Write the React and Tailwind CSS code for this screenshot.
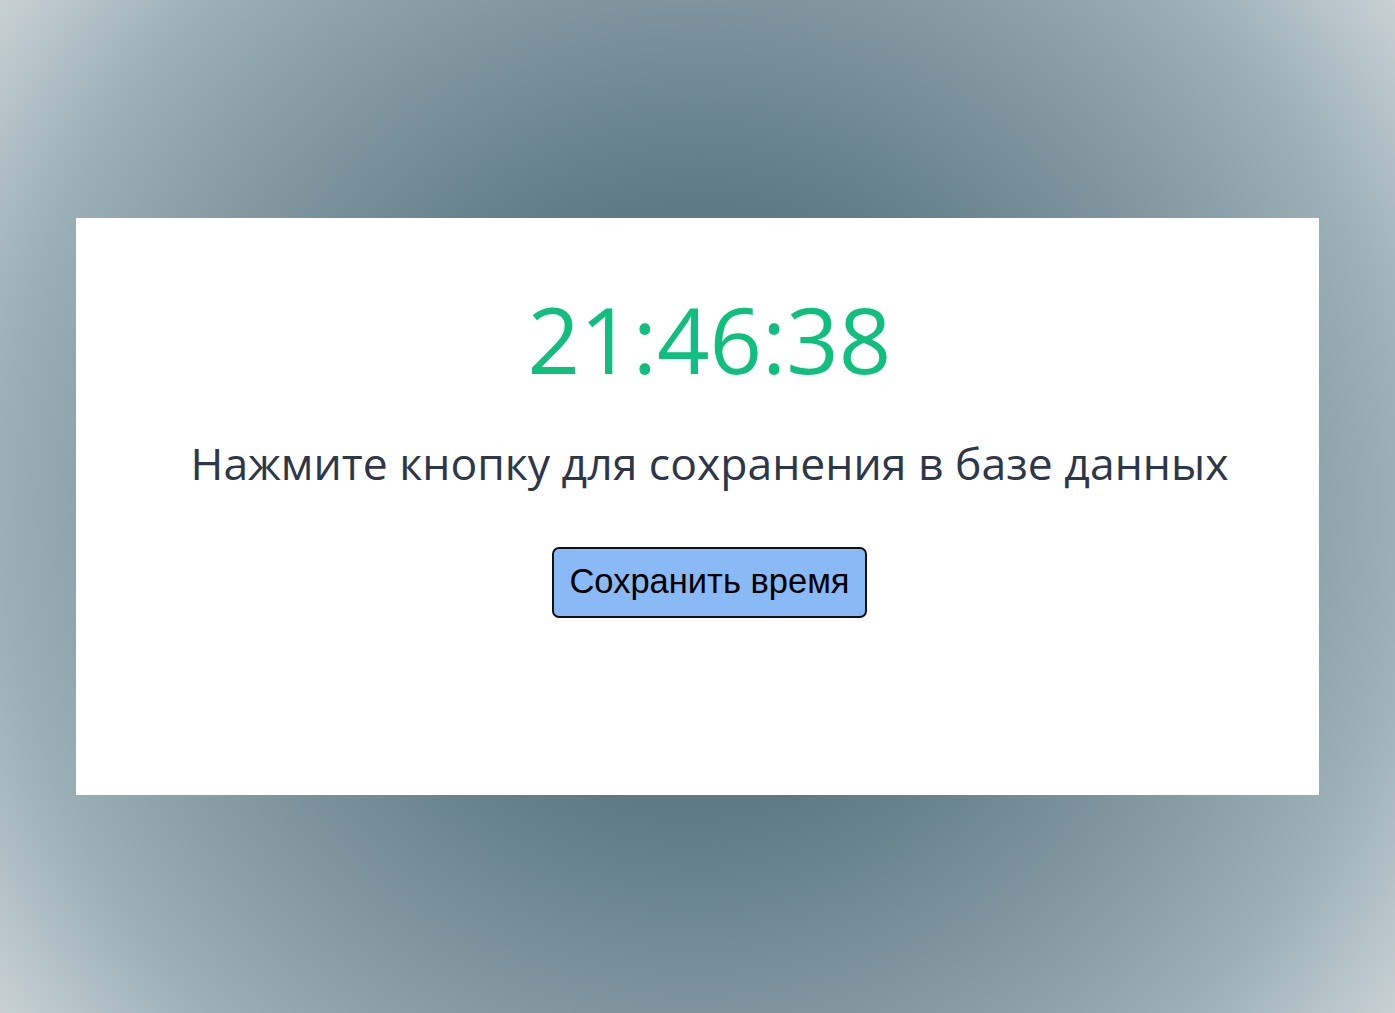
import { useEffect, useState } from 'react';

const App = () => {
  const [time] = useState('21:46:38');
  const [saved, setSaved] = useState(false);

  useEffect(() => {
    if (!saved) return;
    const t = setTimeout(() => setSaved(false), 1500);
    return () => clearTimeout(t);
  }, [saved]);

  return (
    <div className="flex min-h-screen items-center justify-center bg-[radial-gradient(circle_at_center,#5e7a85_35%,#7e959e_59%,#9aafb6_81%,#c8d0d5_100%)] px-[76px]">
      <div className="flex h-[577px] w-full flex-col items-center bg-white pl-6 pt-[75px] font-['Open_Sans','Noto_Sans',sans-serif]">
        <div className="text-[92px] leading-none text-[#10bf7e]">{time}</div>
        <p className="mt-[56px] text-[44.5px] leading-none text-[#2d3748]">
          Нажмите кнопку для сохранения в базе данных
        </p>
        <button
          type="button"
          onClick={() => setSaved(true)}
          className="mt-[61px] h-[71px] rounded-[7px] border-2 border-[#111] bg-[#8abaf6] px-[15px] font-['Liberation_Sans',Arial,sans-serif] text-[34.5px] text-black"
        >
          Сохранить время
        </button>
      </div>
    </div>
  );
};

export default App;
